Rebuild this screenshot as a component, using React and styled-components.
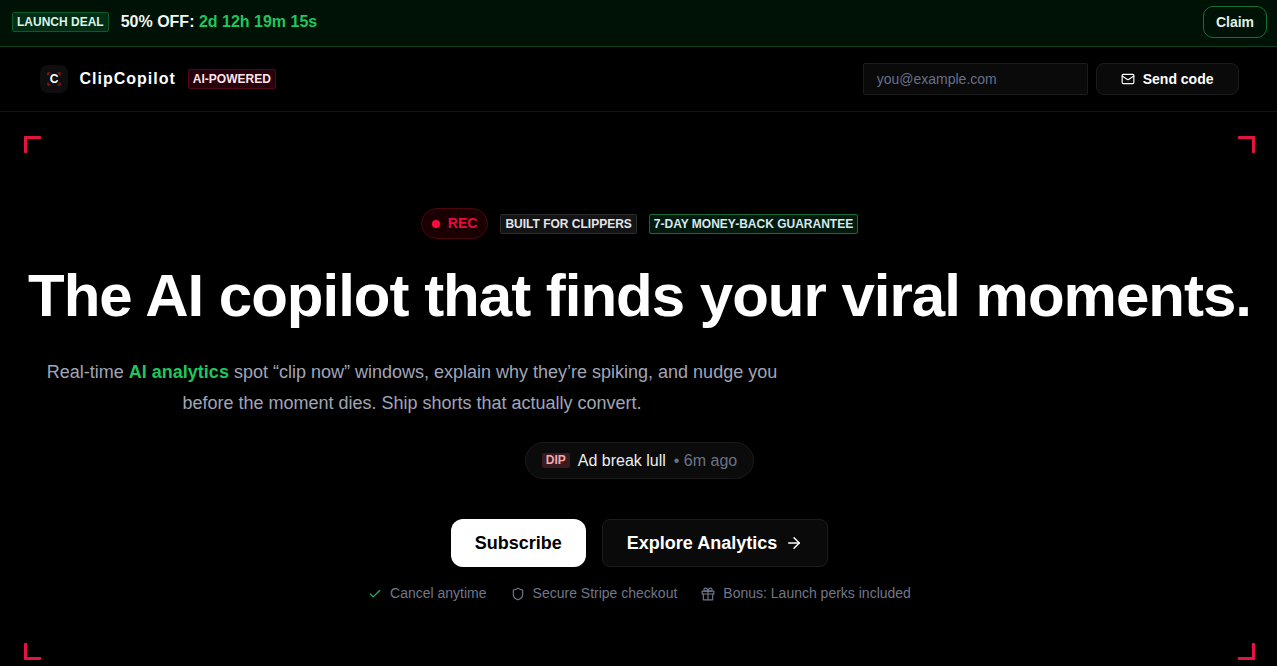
import React from 'react';
import styled, { createGlobalStyle, css } from 'styled-components';
import { ArrowRight, Check, Mail, Shield } from 'lucide-react';
import { FiGift } from 'react-icons/fi';

const GlobalStyle = createGlobalStyle`
  *, *::before, *::after {
    box-sizing: border-box;
  }
  body {
    margin: 0;
    background: #000;
    color: #fff;
    font-family: 'Liberation Sans', Arial, sans-serif;
    font-size: 16px;
    line-height: 24px;
    overflow-x: hidden;
  }
  button, input {
    font-family: inherit;
  }
`;

const tones = {
  green: css`
    background: #022c14;
    border-color: #0b5a2c;
    color: #dcf5e6;
  `,
  outline: css`
    background: #021a0d;
    border-color: #126b38;
    color: #d6e8ee;
  `,
  red: css`
    background: #26000a;
    border-color: #520819;
    color: #ffe4ea;
  `,
  gray: css`
    background: #141414;
    border-color: #2c2c2c;
    color: #e2e4ec;
  `,
};

const Tag = styled.span`
  border: 1px solid;
  border-radius: 2px;
  padding: 0 4px;
  font-size: 12px;
  font-weight: 700;
  line-height: 18px;
  white-space: nowrap;
  ${({ $tone }) => tones[$tone]}
`;

const Banner = styled.div`
  display: flex;
  align-items: center;
  justify-content: space-between;
  padding: 6px 10px 8px 12px;
  background: #001106;
  border-bottom: 1px solid #0b3d22;
`;

const Deal = styled.div`
  display: flex;
  align-items: center;
  gap: 12px;
  font-weight: 700;
  color: #f0f7f2;
`;

const Countdown = styled.span`
  color: #1fc65f;
`;

const Button = styled.button`
  display: inline-flex;
  align-items: center;
  justify-content: center;
  gap: 8px;
  height: 32px;
  padding: 0 24px;
  border: 1px solid #1c1c1c;
  border-radius: 8px;
  background: #0a0a0a;
  color: #fff;
  font-size: 14px;
  font-weight: 700;
  cursor: pointer;
`;

const ClaimButton = styled(Button)`
  padding: 0 12px;
  border-color: #12703a;
  border-radius: 10px;
  background: transparent;
  color: #e0f2e6;
`;

const Header = styled.header`
  border-bottom: 1px solid #141414;
`;

const HeaderInner = styled.div`
  display: flex;
  align-items: center;
  justify-content: space-between;
  max-width: 1200px;
  margin: 0 auto;
  padding: 16px 0;
`;

const Brand = styled.div`
  display: flex;
  align-items: center;
  gap: 12px;
  padding-left: 1px;
`;

const LogoBox = styled.span`
  display: grid;
  place-items: center;
  width: 28px;
  height: 28px;
  border-radius: 8px;
  background: #0e0e0e;
`;

const BrandName = styled.span`
  font-weight: 700;
  letter-spacing: 1px;
`;

const LoginForm = styled.form`
  display: flex;
  gap: 8px;
`;

const EmailInput = styled.input`
  width: 225px;
  height: 32px;
  padding: 0 13px;
  border: 1px solid #1c1c1c;
  border-radius: 2px;
  background: #0a0a0a;
  color: #fff;
  font-size: 14px;
  &::placeholder {
    color: #66708a;
    opacity: 1;
  }
`;

const Frame = styled.main`
  position: relative;
  display: flex;
  flex-direction: column;
  align-items: center;
  margin: 24px 22px 0 24px;
  padding: 72px 4px 56px;
`;

const corners = {
  topLeft: css`
    top: 0;
    left: 0;
    border-width: 3px 0 0 3px;
  `,
  topRight: css`
    top: 0;
    right: 0;
    border-width: 3px 3px 0 0;
  `,
  bottomLeft: css`
    bottom: 0;
    left: 0;
    border-width: 0 0 3px 3px;
  `,
  bottomRight: css`
    bottom: 0;
    right: 0;
    border-width: 0 3px 3px 0;
  `,
};

const Corner = styled.span`
  position: absolute;
  width: 17px;
  height: 17px;
  border: 0 solid #e11442;
  border-radius: 1px;
  ${({ $place }) => corners[$place]}
`;

const TagRow = styled.div`
  display: flex;
  align-items: center;
  gap: 12px;
`;

const RecPill = styled.span`
  display: flex;
  align-items: center;
  gap: 8px;
  height: 31px;
  padding: 0 10px;
  border: 1px solid #4a0811;
  border-radius: 16px;
  background: #1a0003;
  color: #e80c3c;
  font-size: 14px;
  line-height: 21px;
  font-weight: 700;
`;

const RecDot = styled.span`
  width: 8px;
  height: 8px;
  border-radius: 50%;
  background: #ff0a3c;
`;

const Title = styled.h1`
  margin: 27px 0 0;
  font-size: 60px;
  line-height: 60px;
  font-weight: 700;
  letter-spacing: -1px;
  text-align: center;
`;

const Lead = styled.p`
  align-self: flex-start;
  max-width: 768px;
  margin: 31px 0 0;
  padding: 0 16px;
  color: #a0a5b8;
  font-size: 18px;
  line-height: 31px;
  text-align: center;
`;

const Highlight = styled.strong`
  color: #1fc65f;
`;

const SignalPill = styled.div`
  display: flex;
  align-items: center;
  gap: 8px;
  height: 37px;
  margin-top: 23px;
  padding: 0 16px;
  border: 1px solid #1a1a1a;
  border-radius: 19px;
  background: #0b0b0b;
  color: #eceef2;
`;

const SignalKind = styled.span`
  padding: 0 4px;
  border-radius: 2px;
  background: #3a1a1e;
  color: #f0a8ae;
  font-size: 12px;
  font-weight: 700;
  line-height: 15px;
`;

const SignalTime = styled.span`
  color: #6b7388;
`;

const Actions = styled.div`
  display: flex;
  gap: 16px;
  margin-top: 40px;
`;

const LargeButton = styled(Button)`
  height: 48px;
  font-size: 18px;
`;

const PrimaryButton = styled(LargeButton)`
  border: 0;
  border-radius: 12px;
  background: #fff;
  color: #000;
`;

const Perks = styled.ul`
  display: flex;
  gap: 24px;
  margin: 16px 0 0;
  padding: 0;
  list-style: none;
  color: #70778c;
  font-size: 14px;
  line-height: 21px;
`;

const Perk = styled.li`
  display: flex;
  align-items: center;
  gap: 8px;
`;

const Logo = () => (
  <LogoBox>
    <svg width="16" height="16" viewBox="0 0 16 16" fill="none" aria-hidden="true">
      <path
        d="M2 4.500V2H4.500M11.500 2H14V4.500M14 11.500V14H11.500M4.500 14H2V11.500"
        stroke="#b3131f"
        strokeWidth="1.200"
      />
      <text x="8" y="12" textAnchor="middle" fontSize="12" fontWeight="700" fill="#fff">
        C
      </text>
    </svg>
  </LogoBox>
);

const perks = [
  { icon: Check, text: 'Cancel anytime', color: '#1fb978' },
  { icon: Shield, text: 'Secure Stripe checkout' },
  { icon: FiGift, text: 'Bonus: Launch perks included' },
];

const App = () => (
  <>
    <GlobalStyle />
    <Banner>
      <Deal>
        <Tag $tone="green">LAUNCH DEAL</Tag>
        <span>
          50% OFF: <Countdown>2d 12h 19m 15s</Countdown>
        </span>
      </Deal>
      <ClaimButton type="button">Claim</ClaimButton>
    </Banner>
    <Header>
      <HeaderInner>
        <Brand>
          <Logo />
          <BrandName>ClipCopilot</BrandName>
          <Tag $tone="red">AI-POWERED</Tag>
        </Brand>
        <LoginForm onSubmit={e => e.preventDefault()}>
          <EmailInput type="email" placeholder="you@example.com" aria-label="Email" />
          <Button type="submit">
            <Mail size={14} />
            Send code
          </Button>
        </LoginForm>
      </HeaderInner>
    </Header>
    <Frame>
      {Object.keys(corners).map(place => (
        <Corner key={place} $place={place} />
      ))}
      <TagRow>
        <RecPill>
          <RecDot />
          REC
        </RecPill>
        <Tag $tone="gray">BUILT FOR CLIPPERS</Tag>
        <Tag $tone="outline">7-DAY MONEY-BACK GUARANTEE</Tag>
      </TagRow>
      <Title>The AI copilot that finds your viral moments.</Title>
      <Lead>
        Real-time <Highlight>AI analytics</Highlight> spot “clip now” windows, explain why they’re
        spiking, and nudge you before the moment dies. Ship shorts that actually convert.
      </Lead>
      <SignalPill>
        <SignalKind>DIP</SignalKind>
        <span>Ad break lull</span>
        <SignalTime>• 6m ago</SignalTime>
      </SignalPill>
      <Actions>
        <PrimaryButton type="button">Subscribe</PrimaryButton>
        <LargeButton type="button">
          Explore Analytics
          <ArrowRight size={18} />
        </LargeButton>
      </Actions>
      <Perks>
        {perks.map(({ icon: Icon, text, color }) => (
          <Perk key={text}>
            <Icon size={14} color={color} />
            {text}
          </Perk>
        ))}
      </Perks>
    </Frame>
  </>
);

export default App;
